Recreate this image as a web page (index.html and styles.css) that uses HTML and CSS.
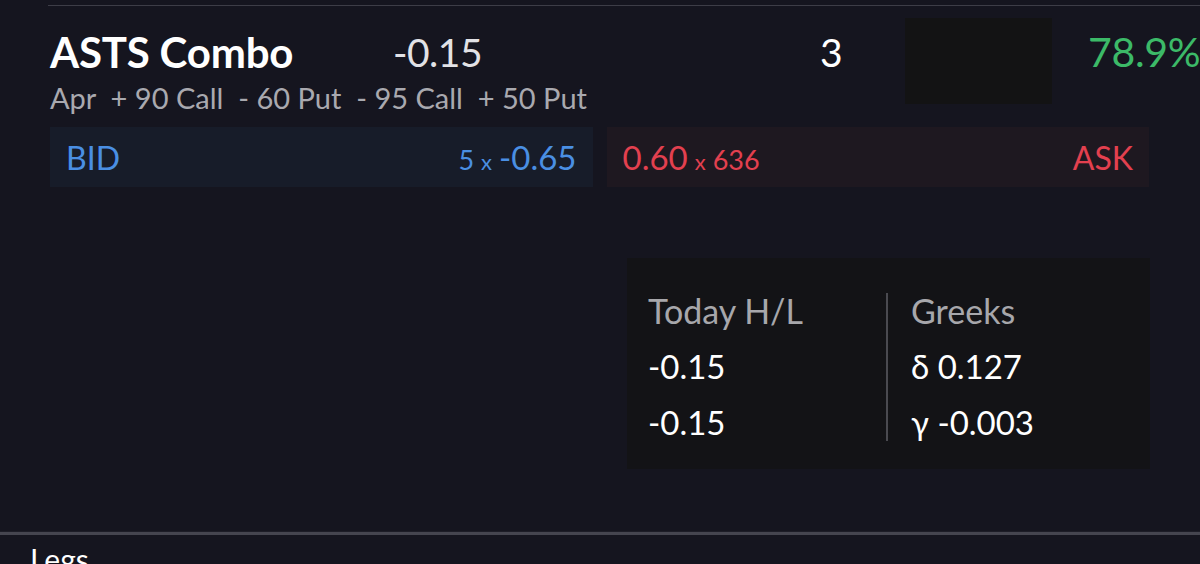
FILE: index.html
```html
<!DOCTYPE html>
<html>
<head>
<meta charset="utf-8">
<link rel="stylesheet" href="styles.css">
</head>
<body>
<div class="page">
  <div class="top-rule"></div>
  <div class="header">
    <div class="title">ASTS Combo</div>
    <div class="price">-0.15</div>
    <div class="qty">3</div>
    <div class="mask"></div>
    <div class="pct">78.9%</div>
    <div class="legs-line">Apr&nbsp; + 90 Call&nbsp; - 60 Put&nbsp; - 95 Call&nbsp; + 50 Put</div>
  </div>
  <div class="quotes">
    <div class="quote bid">
      <span class="label">BID</span>
      <span class="val"><span class="size">5</span><span class="x">x</span><span class="big">-0.65</span></span>
    </div>
    <div class="quote ask">
      <span class="val"><span class="big">0.60</span><span class="x">x</span><span class="size">636</span></span>
      <span class="label">ASK</span>
    </div>
  </div>
  <div class="card">
    <div class="col left">
      <div class="head">Today H/L</div>
      <div class="v">-0.15</div>
      <div class="v">-0.15</div>
    </div>
    <div class="divider"></div>
    <div class="col right">
      <div class="head">Greeks</div>
      <div class="v">δ 0.127</div>
      <div class="v">γ -0.003</div>
    </div>
  </div>
  <div class="bottom-rule"></div>
  <div class="legs-title">Legs</div>
</div>
</body>
</html>
```
FILE: styles.css
```css
html, body {
  margin: 0;
  padding: 0;
  background: #15151f;
  overflow: hidden;
}
body {
  width: 1200px;
  height: 564px;
  font-family: "Lato", "Noto Sans", sans-serif;
  color: #ffffff;
}
.page {
  width: 1200px;
  height: 564px;
  overflow: hidden;
}
.top-rule {
  margin: 5px 0 0 48px;
  height: 1px;
  background: #3d3d47;
}
.header {
  display: grid;
  grid-template-columns: 345px 427px 83px 147px 1fr;
  grid-template-rows: 80px 30px;
  margin-left: 50px;
  margin-top: 11px;
}
.title {
  font-size: 42px;
  font-weight: 700;
  line-height: 70px;
  color: #ffffff;
  letter-spacing: -0.2px;
}
.price {
  font-size: 39px;
  font-weight: 400;
  line-height: 70px;
  color: #e2e2e6;
  letter-spacing: -0.5px;
  margin-left: -2px;
}
.qty {
  font-size: 39px;
  font-weight: 400;
  line-height: 70px;
  color: #ffffff;
  margin-left: -2px;
}
.mask {
  grid-row: 1 / 3;
  width: 147px;
  height: 86px;
  margin-top: 1px;
  background: #131314;
}
.pct {
  padding-left: 36px;
  font-size: 41px;
  font-weight: 400;
  line-height: 70px;
  color: #3cba68;
  white-space: nowrap;
  letter-spacing: -0.3px;
}
.legs-line {
  grid-column: 1 / 4;
  grid-row: 2;
  margin-top: -14px;
  font-size: 29px;
  font-weight: 400;
  line-height: 30px;
  color: #a9a9af;
  white-space: nowrap;
}
.quotes {
  display: flex;
  gap: 14px;
  margin: 0 0 0 50px;
  width: 1099px;
}
.quote {
  flex: 1;
  height: 60px;
  display: flex;
  align-items: center;
  justify-content: space-between;
  padding: 0 16px;
  box-sizing: border-box;
  font-weight: 400;
}
.bid {
  background: #171c29;
  color: #4a8fe3;
}
.ask {
  background: #1e1820;
  color: #e3404f;
}
.label {
  font-size: 32px;
}
.val {
  display: flex;
  align-items: baseline;
}
.big {
  font-size: 33px;
}
.size {
  font-size: 27px;
}
.x {
  font-size: 22px;
  margin: 0 7px;
}
.card {
  display: flex;
  margin: 71px 0 0 627px;
  width: 523px;
  height: 211px;
  background: #131316;
  box-sizing: border-box;
  padding: 35px 0 0 21px;
}
.col {
  display: flex;
  flex-direction: column;
}
.left {
  width: 238px;
}
.divider {
  width: 2px;
  height: 148px;
  background: #4a4a50;
  margin-right: 23px;
}
.head {
  font-size: 34px;
  line-height: 36px;
  color: #a7a7ab;
  margin-bottom: 19px;
}
.v {
  font-size: 33px;
  line-height: 36px;
  color: #ffffff;
  margin-bottom: 20px;
}
.bottom-rule {
  margin-top: 62px;
  height: 3px;
  background: #45454f;
  border-top: 1px solid #1d1d27;
}
.legs-title {
  margin: 6px 0 0 30px;
  font-size: 30px;
  line-height: 36px;
  color: #ffffff;
}
```
